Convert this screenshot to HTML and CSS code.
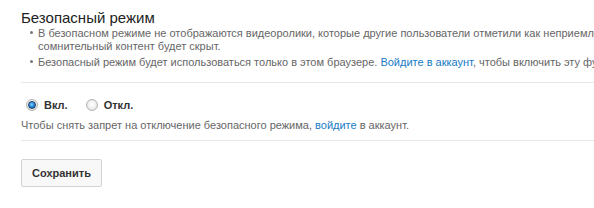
FILE: index.html
```html
<!DOCTYPE html>
<html lang="ru">
<head>
<meta charset="utf-8">
<link rel="stylesheet" href="styles.css">
</head>
<body>
<div class="page">
  <section class="section">
    <h2 class="title">Безопасный режим</h2>
    <ul class="notes">
      <li>В безопасном режиме не отображаются видеоролики, которые другие пользователи отметили как неприемлемые. Кроме того,<br>сомнительный контент будет скрыт.</li>
      <li>Безопасный режим будет использоваться только в этом браузере. <a class="link" href="#">Войдите в аккаунт</a>, чтобы включить эту функцию во всех браузерах.</li>
    </ul>
  </section>
  <section class="section options">
    <div class="radios">
      <label class="radio-item"><span class="radio checked"></span><span class="radio-label">Вкл.</span></label>
      <label class="radio-item"><span class="radio"></span><span class="radio-label">Откл.</span></label>
    </div>
    <p class="hint">Чтобы снять запрет на отключение безопасного режима, <a class="link" href="#">войдите</a> в аккаунт.</p>
  </section>
  <div class="actions">
    <button class="btn" type="button">Сохранить</button>
  </div>
</div>
</body>
</html>
```

FILE: styles.css
```css
html, body {
  margin: 0;
  padding: 0;
  background: #fff;
  overflow: hidden;
}
.page {
  width: 700px;
  padding: 8px 0 0 21px;
  font-family: "Liberation Sans", Arial, sans-serif;
  font-size: 11px;
  color: #666;
}
.section {
  border-bottom: 1px solid #e8e8e8;
}
.title {
  margin: 0;
  font-size: 15px;
  font-weight: normal;
  line-height: 19px;
  color: #222;
}
.notes {
  margin: 0 0 13px;
  padding: 0 0 0 17px;
  list-style: none;
  white-space: nowrap;
}
.notes li {
  line-height: 13px;
  margin-bottom: 3px;
}
.notes li::before {
  content: "";
  display: inline-block;
  width: 3px;
  height: 3px;
  border-radius: 50%;
  background: #777;
  margin-left: -8px;
  margin-right: 5px;
  vertical-align: 3px;
}
.link {
  color: #167ac6;
  text-decoration: none;
}
.options {
  padding-top: 14px;
  padding-bottom: 8px;
}
.radios {
  display: flex;
  align-items: center;
  gap: 18px;
  padding-left: 5px;
  height: 16px;
}
.radio-item {
  display: flex;
  align-items: center;
  gap: 6px;
  font-weight: bold;
  color: #333;
}
.radio {
  display: flex;
  align-items: center;
  justify-content: center;
  width: 12px;
  height: 12px;
  border-radius: 50%;
  box-sizing: border-box;
  border: 1px solid #b4b4b4;
  background: radial-gradient(circle at 50% 45%, #ffffff 0%, #f2f2f2 45%, #d2d2d2 100%);
}
.radio.checked::after {
  content: "";
  width: 6px;
  height: 6px;
  border-radius: 50%;
  border: 1px solid #1d3f63;
  background: radial-gradient(circle at 45% 40%, #8fd0ff 0%, #2a8ee0 45%, #125a9e 100%);
}
.hint {
  margin: 6px 0 0;
  line-height: 13px;
}
.actions {
  padding-top: 18px;
}
.btn {
  font-family: "Liberation Sans", Arial, sans-serif;
  font-size: 11px;
  font-weight: bold;
  color: #333;
  height: 28px;
  padding: 0 10px;
  background: #f8f8f8;
  border: 1px solid #d3d3d3;
  border-radius: 2px;
  box-shadow: 0 1px 0 rgba(0,0,0,0.05);
}
```
